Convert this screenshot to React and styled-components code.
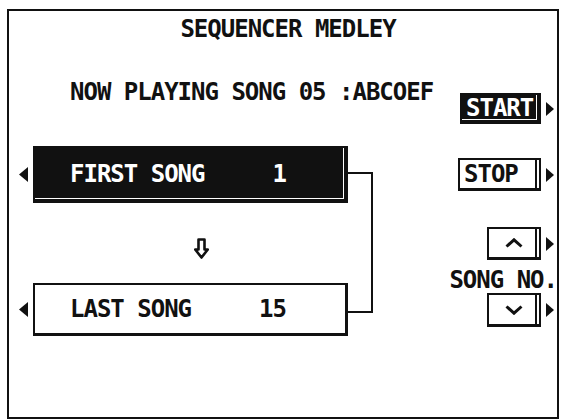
import React from "react";
import styled, { createGlobalStyle } from "styled-components";

const GlobalStyle = createGlobalStyle`
  html, body {
    margin: 0;
    padding: 0;
    background: #fff;
  }
`;

const Screen = styled.div`
  box-sizing: border-box;
  margin: 9px 0 0 7px;
  width: 552px;
  height: 410px;
  border: 2px solid #111;
  display: flex;
  flex-direction: column;
  color: #111;
  background: #fff;
  font-family: "DejaVu Sans Mono", "Liberation Mono", monospace;
  font-weight: bold;
  font-size: 24px;
  line-height: 24px;
  letter-spacing: -1px;

  svg {
    flex-shrink: 0;
    display: block;
  }
`;

const Title = styled.div`
  text-align: center;
  padding: 6px 0 0 10px;
`;

const Main = styled.div`
  display: grid;
  grid-template-columns: 1fr 108px;
  margin-top: 39px;
`;

const LeftCol = styled.div`
  display: flex;
  flex-direction: column;
`;

const NowPlaying = styled.div`
  padding-left: 61px;
  white-space: pre;
`;

const SongArea = styled.div`
  margin-top: 42px;
  display: grid;
  grid-template-columns: auto 25px;
  grid-template-rows: 57px 80px 53px;
  justify-content: start;
`;

const SongRow = styled.div`
  display: flex;
  align-items: center;
  gap: 5px;
  padding-left: 10px;
  grid-column: 1;
`;

const SongBox = styled.div`
  box-sizing: border-box;
  width: 315px;
  height: 100%;
  display: flex;
  align-items: center;
  padding-left: 35px;
  border: 2px solid #111;
  border-right-width: 3px;
  border-bottom-width: 3px;
  background: ${(p) => (p.$active ? "#111" : "#fff")};
  color: ${(p) => (p.$active ? "#fff" : "#111")};
  box-shadow: ${(p) =>
    p.$active ? "inset -1px -1px 0 #111, inset -2px -2px 0 #fff" : "none"};
`;

const SongText = styled.div`
  width: 216px;
  display: flex;
  justify-content: space-between;
`;

const ArrowGap = styled.div`
  grid-column: 1;
  padding: 35px 0 0 185px;
`;

const Bracket = styled.div`
  grid-column: 2;
  grid-row: 1 / 4;
  margin: 26px 0 23px;
  border: 2px solid #111;
  border-left: none;
`;

const RightCol = styled.div`
  display: flex;
  flex-direction: column;
  align-items: flex-end;
`;

const ButtonRow = styled.div`
  display: flex;
  align-items: center;
  gap: 5px;
  padding-right: 3px;
  margin-top: ${(p) => p.$top}px;
`;

const Button = styled.div`
  box-sizing: border-box;
  width: ${(p) => p.$w}px;
  height: ${(p) => p.$h}px;
  display: flex;
  align-items: center;
  justify-content: ${(p) => (p.$icon ? "center" : "flex-start")};
  padding-left: ${(p) => (p.$icon ? 0 : 4)}px;
  border: 2px solid #111;
  border-bottom-width: 3px;
  background: ${(p) => (p.$active ? "#111" : "#fff")};
  color: ${(p) => (p.$active ? "#fff" : "#111")};
  box-shadow: ${(p) =>
    p.$active
      ? "inset -2px -1px 0 #111, inset -3px -2px 0 #fff"
      : "inset -2px 0 0 #fff, inset -4px 0 0 #111"};
`;

const SideLabel = styled.div`
  margin-top: 8px;
  white-space: pre;
`;

const LeftTri = () => (
  <svg width="9" height="15" viewBox="0 0 9 15">
    <polygon points="9,0 9,15 0,7.5" fill="#111" />
  </svg>
);

const RightTri = () => (
  <svg width="8" height="14" viewBox="0 0 8 14">
    <polygon points="0,0 8,7 0,14" fill="#111" />
  </svg>
);

const DownArrow = () => (
  <svg width="15" height="21" viewBox="0 0 15 21">
    <path
      d="M4.5 1.5 H10.5 V11.5 H13.8 L7.5 19.5 L1.2 11.5 H4.5 Z"
      fill="none"
      stroke="#111"
      strokeWidth="2.6"
      strokeLinejoin="round"
    />
  </svg>
);

const Chevron = ({ up }) => (
  <svg width="18" height="10" viewBox="0 0 18 10">
    <polyline
      points={up ? "1.5,8.5 9,1.8 16.5,8.5" : "1.5,1.5 9,8.2 16.5,1.5"}
      fill="none"
      stroke="#111"
      strokeWidth="3"
    />
  </svg>
);

export default function App() {
  return (
    <>
      <GlobalStyle />
      <Screen>
        <Title>SEQUENCER MEDLEY</Title>
        <Main>
          <LeftCol>
            <NowPlaying>NOW PLAYING SONG 05 :ABCOEF</NowPlaying>
            <SongArea>
              <SongRow>
                <LeftTri />
                <SongBox $active>
                  <SongText>
                    <span>FIRST SONG</span>
                    <span>1</span>
                  </SongText>
                </SongBox>
              </SongRow>
              <ArrowGap>
                <DownArrow />
              </ArrowGap>
              <SongRow>
                <LeftTri />
                <SongBox>
                  <SongText>
                    <span>LAST SONG</span>
                    <span>15</span>
                  </SongText>
                </SongBox>
              </SongRow>
              <Bracket />
            </SongArea>
          </LeftCol>
          <RightCol>
            <ButtonRow $top={13}>
              <Button $active $w={81} $h={31}>
                START
              </Button>
              <RightTri />
            </ButtonRow>
            <ButtonRow $top={34}>
              <Button $w={83} $h={33}>
                STOP
              </Button>
              <RightTri />
            </ButtonRow>
            <ButtonRow $top={36}>
              <Button $icon $w={54} $h={33}>
                <Chevron up />
              </Button>
              <RightTri />
            </ButtonRow>
            <SideLabel>SONG NO.</SideLabel>
            <ButtonRow $top={1}>
              <Button $icon $w={54} $h={34}>
                <Chevron />
              </Button>
              <RightTri />
            </ButtonRow>
          </RightCol>
        </Main>
      </Screen>
    </>
  );
}
